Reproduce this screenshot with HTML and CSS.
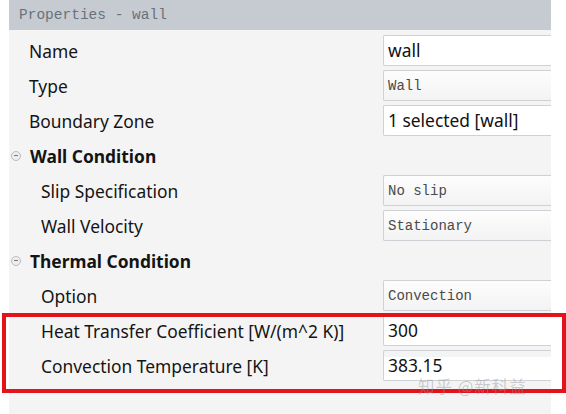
FILE: index.html
```html
<!DOCTYPE html>
<html>
<head>
<meta charset="utf-8">
<link rel="stylesheet" href="styles.css">
</head>
<body>
<div class="panel">
  <div class="title">Properties - wall</div>
  <div class="rows">
    <div class="row"><div class="label">Name</div><div class="field">wall</div></div>
    <div class="row"><div class="label">Type</div><div class="field drop">Wall</div></div>
    <div class="row"><div class="label">Boundary Zone</div><div class="field">1 selected [wall]</div></div>
    <div class="row group"><span class="toggle"></span><div class="label">Wall Condition</div></div>
    <div class="row sub"><div class="label">Slip Specification</div><div class="field drop">No slip</div></div>
    <div class="row sub"><div class="label">Wall Velocity</div><div class="field drop">Stationary</div></div>
    <div class="row group"><span class="toggle"></span><div class="label">Thermal Condition</div></div>
    <div class="row sub"><div class="label">Option</div><div class="field drop">Convection</div></div>
    <div class="row sub"><div class="label">Heat Transfer Coefficient [W/(m^2 K)]</div><div class="field">300</div></div>
    <div class="row sub"><div class="label">Convection Temperature [K]</div><div class="field grad">383.15</div></div>
  </div>
</div>
<div class="highlight"></div>
<div class="watermark">知乎 @新科益</div>
</body>
</html>
```

FILE: styles.css
```css
html, body {
  margin: 0;
  padding: 0;
  background: #ffffff;
  width: 566px;
  height: 414px;
  overflow: hidden;
}
.panel {
  margin-left: 9px;
  width: 542px;
  height: 414px;
  background: #f4f4f5;
}
.title {
  height: 30px;
  line-height: 30px;
  background: #c6cbd1;
  padding-left: 10px;
  font-family: "Liberation Mono", monospace;
  font-size: 14.5px;
  color: #6a7179;
}
.rows {
  padding-top: 3px;
}
.row {
  display: flex;
  align-items: center;
  height: 35px;
  position: relative;
}
.label {
  flex: 1;
  padding-left: 20px;
  font-family: "Noto Sans", "Open Sans", sans-serif;
  font-size: 17.4px;
  color: #141414;
  white-space: nowrap;
}
.sub .label {
  padding-left: 32px;
}
.group .label {
  font-weight: 700;
  padding-left: 9px;
}
.toggle {
  width: 8px;
  height: 8px;
  margin-left: 2px;
  border: 1px solid #b9bcc0;
  border-radius: 50%;
  background: #eceef0;
  position: relative;
}
.toggle::after {
  content: "";
  position: absolute;
  left: 2px;
  top: 3.5px;
  width: 4px;
  height: 1px;
  background: #777;
}
.field {
  width: 163px;
  height: 26px;
  padding-top: 3px;
  border: 1px solid #ced1d5;
  border-right: none;
  border-radius: 2px 0 0 2px;
  background: #ffffff;
  padding-left: 4px;
  font-family: "Noto Sans", "Open Sans", sans-serif;
  font-size: 17.4px;
  line-height: 22px;
  color: #111;
  white-space: nowrap;
  overflow: hidden;
}
.field.drop {
  height: 25px;
  padding-top: 4px;
  font-family: "Liberation Mono", monospace;
  font-size: 14px;
  color: #4a4a4a;
  background: linear-gradient(#fdfdfd, #f3f3f4);
}
.field.grad {
  background: linear-gradient(#f3f4f5 0, #f3f4f5 6px, #ffffff 6px);
}
.highlight {
  position: absolute;
  left: 2px;
  top: 313px;
  width: 556px;
  height: 72px;
  border: 4px solid #e3121b;
}
.watermark {
  position: absolute;
  left: 418px;
  top: 378px;
  height: 16px;
  line-height: 16px;
  font-family: "Noto Sans CJK SC", sans-serif;
  font-size: 16.5px;
  color: rgba(150, 150, 150, 0.45);
  letter-spacing: 1px;
}
```
